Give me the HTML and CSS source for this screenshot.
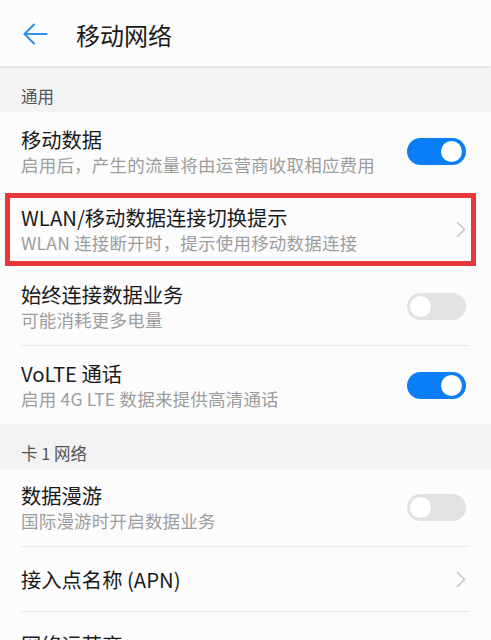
FILE: index.html
```html
<!DOCTYPE html>
<html lang="zh-CN">
<head>
<meta charset="utf-8">
<title>移动网络</title>
<link rel="stylesheet" href="styles.css">
</head>
<body>
<div class="page">
  <header class="topbar">
    <svg class="back" width="26" height="24" viewBox="0 0 26 24" aria-hidden="true">
      <path d="M24.5 12H2.5M12 2.5L2.5 12L12 21.5" fill="none" stroke="#2f8ff0" stroke-width="2.1" stroke-linecap="round" stroke-linejoin="round"/>
    </svg>
    <h1 class="title">移动网络</h1>
  </header>

  <div class="section">通用</div>

  <div class="row">
    <div class="text">
      <div class="main">移动数据</div>
      <div class="sub">启用后，产生的流量将由运营商收取相应费用</div>
    </div>
    <span class="switch on"></span>
  </div>

  <div class="row highlighted">
    <div class="text">
      <div class="main">WLAN/移动数据连接切换提示</div>
      <div class="sub">WLAN 连接断开时，提示使用移动数据连接</div>
    </div>
    <svg class="chev" width="10" height="17" viewBox="0 0 10 17" aria-hidden="true"><path d="M1.5 1.5L8.5 8.5L1.5 15.5" fill="none" stroke="#c6c6c6" stroke-width="1.6" stroke-linecap="round" stroke-linejoin="round"/></svg>
    <span class="mark"></span>
  </div>

  <div class="row divided">
    <div class="text">
      <div class="main">始终连接数据业务</div>
      <div class="sub">可能消耗更多电量</div>
    </div>
    <span class="switch"></span>
  </div>

  <div class="row">
    <div class="text">
      <div class="main">VoLTE 通话</div>
      <div class="sub">启用 4G LTE 数据来提供高清通话</div>
    </div>
    <span class="switch on"></span>
  </div>

  <div class="section">卡 1 网络</div>

  <div class="row divided">
    <div class="text">
      <div class="main">数据漫游</div>
      <div class="sub">国际漫游时开启数据业务</div>
    </div>
    <span class="switch"></span>
  </div>

  <div class="row single divided">
    <div class="text">
      <div class="main">接入点名称 (APN)</div>
    </div>
    <svg class="chev" width="10" height="17" viewBox="0 0 10 17" aria-hidden="true"><path d="M1.5 1.5L8.5 8.5L1.5 15.5" fill="none" stroke="#c6c6c6" stroke-width="1.6" stroke-linecap="round" stroke-linejoin="round"/></svg>
  </div>

  <div class="row single">
    <div class="text">
      <div class="main">网络运营商</div>
    </div>
  </div>
</div>
</body>
</html>
```

FILE: styles.css
```css
html, body {
  margin: 0;
  padding: 0;
  background: #fcfcfc;
}
body {
  font-family: "Noto Sans CJK SC", "Noto Sans", sans-serif;
  color: #1b1b1b;
  overflow: hidden;
}
.page {
  width: 491px;
  height: 640px;
  overflow: hidden;
}
.topbar {
  height: 66px;
  display: flex;
  align-items: center;
  background: #fcfcfc;
  border-bottom: 1px solid #e4e4e4;
  box-shadow: 0 1px 2px rgba(0,0,0,0.06);
  position: relative;
  z-index: 1;
}
.back {
  margin-left: 22px;
  margin-top: 2px;
}
.title {
  margin: 0 0 0 28px;
  font-size: 24px;
  font-weight: 400;
  line-height: 30px;
  color: #1a1a1a;
  margin-top: 4px;
}
.section {
  height: 45px;
  box-sizing: border-box;
  background: #f3f3f3;
  padding: 17px 0 0 21px;
  font-size: 16.5px;
  line-height: 24px;
  color: #555;
}
.row {
  margin: 0 21px;
  min-height: 78px;
  display: flex;
  align-items: center;
  justify-content: space-between;
  box-sizing: border-box;
  padding-right: 4px;
  position: relative;
}
.row.single {
  min-height: 65px;
}
.row.divided {
  border-bottom: 1px solid #e9e9e9;
}
.text {
  display: flex;
  flex-direction: column;
}
.main {
  font-size: 20.3px;
  line-height: 27px;
  color: #1a1a1a;
}
.sub {
  font-size: 17.5px;
  line-height: 24px;
  letter-spacing: 0.2px;
  color: #9d9d9d;
}
.switch {
  width: 59px;
  height: 27px;
  border-radius: 14px;
  background: #e2e2e2;
  position: relative;
  flex: none;
}
.switch::after {
  content: "";
  position: absolute;
  top: 3px;
  left: 3px;
  width: 21px;
  height: 21px;
  border-radius: 50%;
  background: #fff;
}
.switch.on {
  background: #0a7ef6;
}
.switch.on::after {
  left: auto;
  right: 4px;
}
.chev {
  flex: none;
  margin-right: 0;
}
.mark {
  position: absolute;
  left: -16px;
  top: 3px;
  width: 471px;
  height: 73px;
  box-sizing: border-box;
  border: 5px solid #e8383b;
  pointer-events: none;
}
```
